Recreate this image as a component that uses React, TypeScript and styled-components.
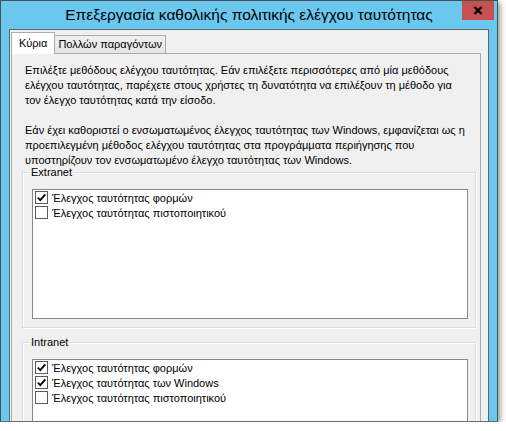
import styled, { createGlobalStyle } from "styled-components";

const GlobalStyle = createGlobalStyle`
  html, body {
    margin: 0;
    padding: 0;
    background: #ffffff;
  }
  body {
    font-family: "Liberation Sans", Arial, sans-serif;
    color: #000000;
  }
`;

const Window = styled.div`
  box-sizing: border-box;
  width: 498px;
  height: 422px;
  display: flex;
  flex-direction: column;
  background: #6ac7ed;
  border: 1px solid #4a4f55;
  border-bottom-color: #6b6b6b;
  box-shadow: 2px 2px 6px rgba(0, 0, 0, 0.45);
  overflow: hidden;
`;

const TitleBar = styled.div`
  flex-shrink: 0;
  height: 28px;
  display: grid;
  grid-template-columns: 1fr auto 1fr;
  align-items: start;
`;

const Title = styled.div`
  grid-column: 2;
  font-size: 15.5px;
  line-height: 28px;
  white-space: nowrap;
`;

const CloseButton = styled.div`
  grid-column: 3;
  justify-self: end;
  width: 32px;
  height: 19px;
  margin-right: 3px;
  background: #c75050;
  display: flex;
  align-items: center;
  justify-content: center;
`;

const Client = styled.div`
  flex: 1;
  min-height: 0;
  margin: 0 8px;
  background: #f0f0f0;
  border: 1px solid #5b6670;
  border-bottom: none;
  padding: 2px 7px 0 1px;
  display: flex;
  flex-direction: column;
`;

const TabStrip = styled.div`
  flex-shrink: 0;
  height: 21px;
  display: flex;
  align-items: flex-end;
`;

const Tab = styled.div<{ $active?: boolean }>`
  box-sizing: border-box;
  height: ${(p) => (p.$active ? 22 : 18)}px;
  margin-bottom: ${(p) => (p.$active ? -1 : 0)}px;
  position: relative;
  z-index: ${(p) => (p.$active ? 1 : 0)};
  padding: 0 ${(p) => (p.$active ? 7 : 3)}px;
  border: 1px solid #acacac;
  border-bottom: none;
  border-left-width: ${(p) => (p.$active ? 1 : 0)}px;
  background: ${(p) =>
    p.$active ? "#ffffff" : "linear-gradient(#f0f0f0, #e5e5e5)"};
  font-size: 11px;
  line-height: ${(p) => (p.$active ? 20 : 16)}px;
  white-space: nowrap;
`;

const TabPanel = styled.div`
  flex: 1;
  min-height: 0;
  border: 1px solid #acacac;
  border-bottom: none;
  padding: 9px 4px 0 10px;
`;

const Intro = styled.p<{ $after: number }>`
  margin: 0 0 ${(p) => p.$after}px 3px;
  font-size: 11px;
  line-height: 15px;
  white-space: nowrap;
`;

// etched group frame; the caption sits across its top edge
const Group = styled.section<{ $gap: number }>`
  margin-top: ${(p) => p.$gap}px;
  padding: 0 7px 8px 9px;
  border: 1px solid #d5dfe5;
  box-shadow: inset 1px 1px 0 #ffffff, 1px 1px 0 #ffffff;
`;

const GroupLabel = styled.div`
  width: fit-content;
  margin: -8px 0 0 -2px;
  padding: 0 1px;
  background: #f0f0f0;
  font-size: 11px;
  line-height: 15px;
`;

const ListBox = styled.div`
  box-sizing: border-box;
  height: 130px;
  margin-top: 9px;
  background: #ffffff;
  border: 1px solid #828790;
`;

const Item = styled.div`
  height: 15px;
  padding-left: 2px;
  display: flex;
  align-items: center;
  gap: 4px;
  font-size: 11px;
  white-space: nowrap;
`;

const Box = styled.span`
  box-sizing: border-box;
  width: 13px;
  height: 13px;
  flex-shrink: 0;
  border: 1px solid #5a5a5a;
  background: #ffffff;
  display: flex;
  align-items: center;
  justify-content: center;
`;

function CheckBox({ checked }: { checked: boolean }) {
  return (
    <Box>
      {checked && (
        <svg width="11" height="11" viewBox="0 0 11 11">
          <path
            d="M1.8 5.6 L4.3 8.1 L9.3 2.4"
            fill="none"
            stroke="#000000"
            strokeWidth="1.9"
          />
        </svg>
      )}
    </Box>
  );
}

interface Method {
  label: string;
  checked: boolean;
}

const extranet: Method[] = [
  { label: "Έλεγχος ταυτότητας φορμών", checked: true },
  { label: "Έλεγχος ταυτότητας πιστοποιητικού", checked: false },
];

const intranet: Method[] = [
  { label: "Έλεγχος ταυτότητας φορμών", checked: true },
  { label: "Έλεγχος ταυτότητας των Windows", checked: true },
  { label: "Έλεγχος ταυτότητας πιστοποιητικού", checked: false },
];

function MethodGroup(props: { title: string; methods: Method[]; gap: number }) {
  return (
    <Group $gap={props.gap}>
      <GroupLabel>{props.title}</GroupLabel>
      <ListBox>
        {props.methods.map((m) => (
          <Item key={m.label}>
            <CheckBox checked={m.checked} />
            {m.label}
          </Item>
        ))}
      </ListBox>
    </Group>
  );
}

export default function App() {
  return (
    <>
      <GlobalStyle />
      <Window>
        <TitleBar>
          <Title>Επεξεργασία καθολικής πολιτικής ελέγχου ταυτότητας</Title>
          <CloseButton>
            <svg width="10" height="9" viewBox="0 0 10 9">
              <path
                d="M1.5 1 L8.5 8 M8.5 1 L1.5 8"
                stroke="#000000"
                strokeWidth="2.4"
              />
            </svg>
          </CloseButton>
        </TitleBar>
        <Client>
          <TabStrip>
            <Tab $active>Κύρια</Tab>
            <Tab>Πολλών παραγόντων</Tab>
          </TabStrip>
          <TabPanel>
            <Intro $after={15}>
              Επιλέξτε μεθόδους ελέγχου ταυτότητας. Εάν επιλέξετε περισσότερες
              από μία μεθόδους
              <br />
              ελέγχου ταυτότητας, παρέχετε στους χρήστες τη δυνατότητα να
              επιλέξουν τη μέθοδο για
              <br />
              τον έλεγχο ταυτότητας κατά την είσοδο.
            </Intro>
            <Intro $after={0}>
              Εάν έχει καθοριστεί ο ενσωματωμένος έλεγχος ταυτότητας των
              Windows, εμφανίζεται ως η
              <br />
              προεπιλεγμένη μέθοδος ελέγχου ταυτότητας στα προγράμματα
              περιήγησης που
              <br />
              υποστηρίζουν τον ενσωματωμένο έλεγχο ταυτότητας των Windows.
            </Intro>
            <MethodGroup title="Extranet" methods={extranet} gap={4} />
            <MethodGroup title="Intranet" methods={intranet} gap={14} />
          </TabPanel>
        </Client>
      </Window>
    </>
  );
}
